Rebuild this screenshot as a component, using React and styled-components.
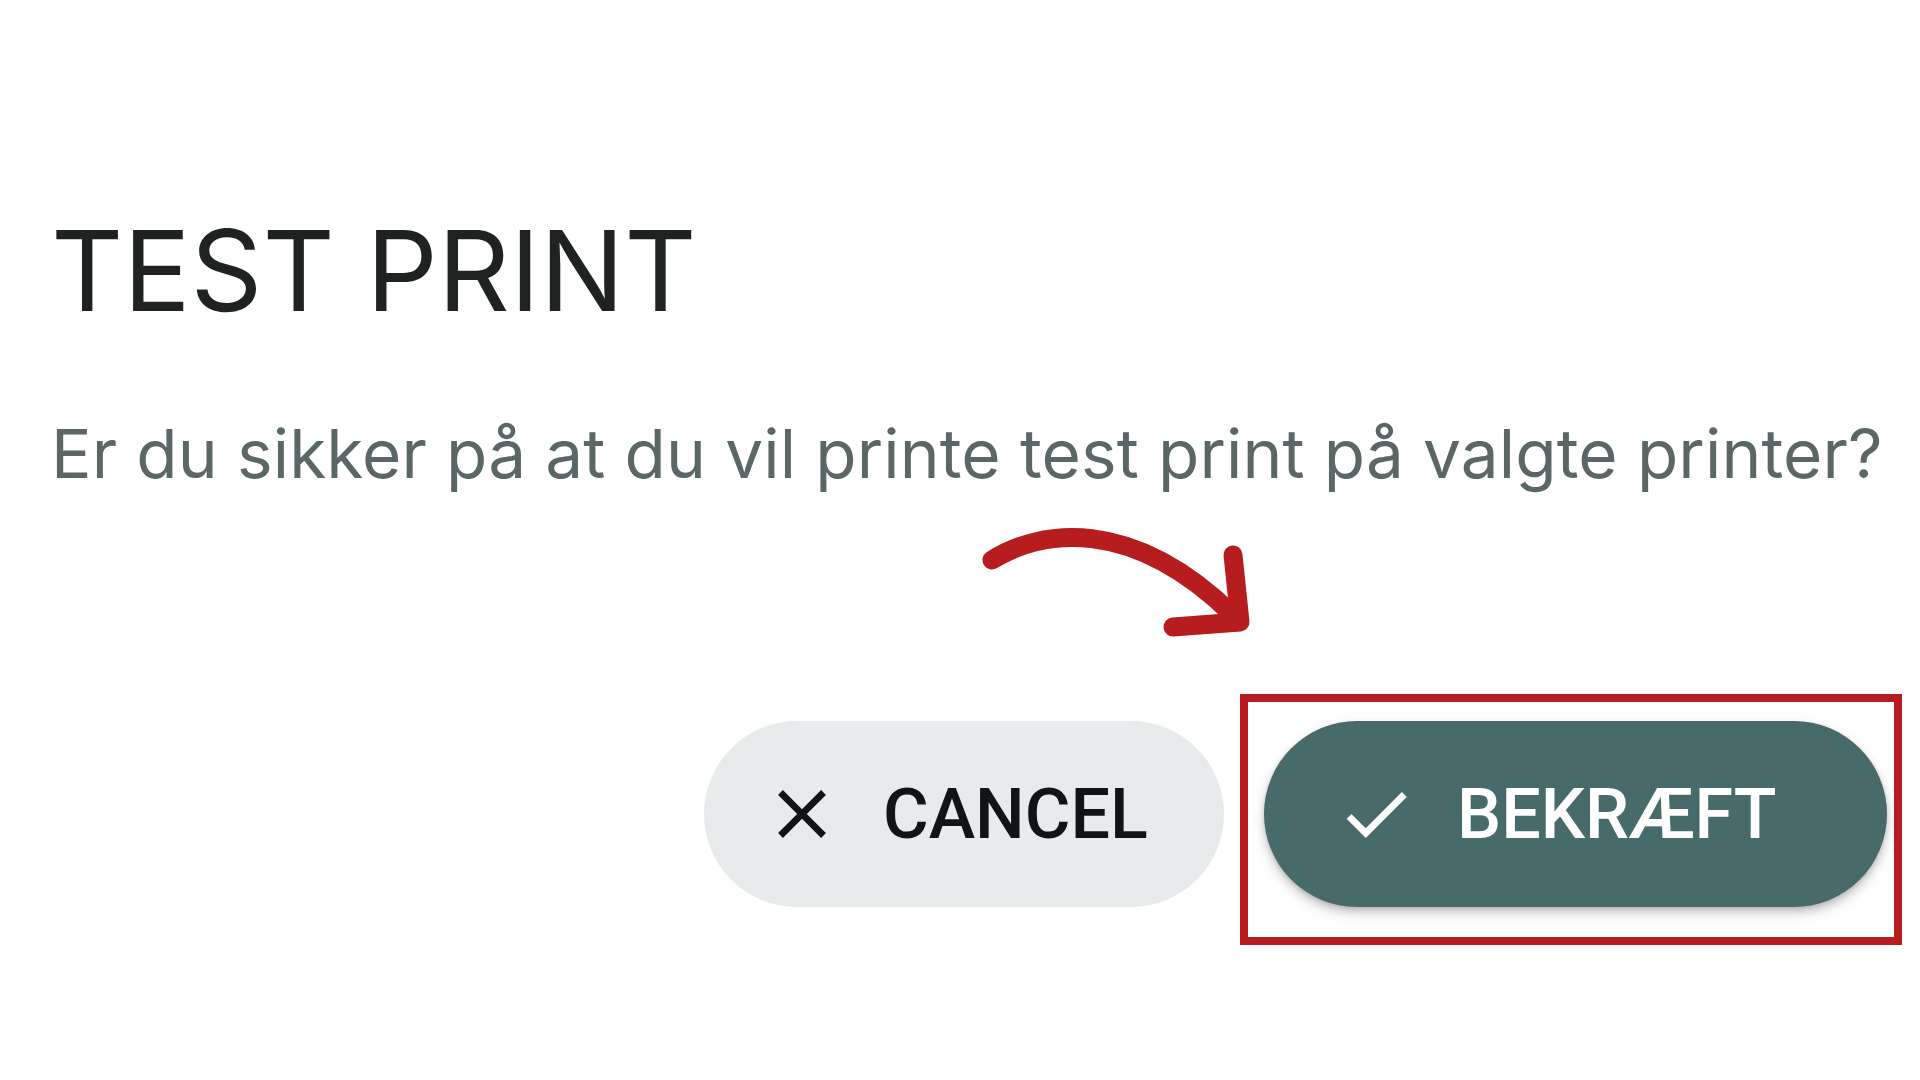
import React from "react";
import styled, { createGlobalStyle } from "styled-components";

const Global = createGlobalStyle`
  html, body { margin: 0; padding: 0; background: #ffffff; }
  body { font-family: "Inter", "Roboto", "Liberation Sans", sans-serif; }
`;

const Page = styled.div`
  position: relative;
  width: 1920px;
  height: 1080px;
  box-sizing: border-box;
  padding: 0 18px 0 51px;
  display: flex;
  flex-direction: column;
  overflow: hidden;
`;

const Title = styled.h1`
  margin: 214px 0 0 0;
  font-size: 112px;
  line-height: 1;
  font-weight: 400;
  color: #1e2222;
  letter-spacing: 0;
`;

const Message = styled.p`
  margin: 94px 0 0 0;
  font-size: 67.5px;
  line-height: 1;
  font-weight: 400;
  color: #5b6766;
  letter-spacing: 0.12px;
  white-space: nowrap;
`;

const Actions = styled.div`
  margin-top: 206px;
  display: flex;
  justify-content: flex-end;
  align-items: flex-start;
  gap: 16px;
`;

const Highlight = styled.div`
  border: 8px solid #b71c1f;
  padding: 19px 7px 30px 16px;
  display: flex;
`;

const Button = styled.button`
  box-sizing: border-box;
  width: ${(p) => p.$width}px;
  height: 186px;
  margin-top: ${(p) => p.$offset || 0}px;
  border: none;
  border-radius: 93px;
  padding: 0 0 0 ${(p) => p.$pad}px;
  display: flex;
  align-items: center;
  gap: 40px;
  background: ${(p) => (p.$primary ? "#476b6b" : "#e8ebeb")};
  color: ${(p) => (p.$primary ? "#ffffff" : "#111414")};
  box-shadow: ${(p) =>
    p.$primary ? "0 6px 12px rgba(0,0,0,0.22), 0 2px 4px rgba(0,0,0,0.12)" : "none"};
  font-family: "Roboto", "Inter", sans-serif;
  font-size: 70px;
  font-weight: 500;
  letter-spacing: 0;
  text-transform: uppercase;
  cursor: pointer;
`;

const Icon = styled.svg`
  width: 82px;
  height: 82px;
  flex: none;
  fill: currentColor;
`;

const Annotation = styled.svg`
  position: absolute;
  left: 970px;
  top: 510px;
  width: 290px;
  height: 140px;
  pointer-events: none;
`;

export default function App() {
  return (
    <>
      <Global />
      <Page>
        <Title>TEST PRINT</Title>
        <Message>Er du sikker på at du vil printe test print på valgte printer?</Message>
        <Actions>
          <Button $width={520} $pad={57} $offset={27}>
            <Icon viewBox="0 0 24 24">
              <path d="M19 6.41 17.59 5 12 10.59 6.41 5 5 6.41 10.59 12 5 17.59 6.41 19 12 13.41 17.59 19 19 17.59 13.41 12z" />
            </Icon>
            Cancel
          </Button>
          <Highlight>
            <Button $primary $width={623} $pad={71}>
              <Icon viewBox="0 0 24 24">
                <path d="M9 16.17 4.83 12l-1.42 1.41L9 19 21 7l-1.41-1.41z" />
              </Icon>
              Bekræft
            </Button>
          </Highlight>
        </Actions>
        <Annotation viewBox="0 0 290 140">
          <g fill="none" stroke="#b71c1f" strokeWidth="19" strokeLinecap="round" strokeLinejoin="round">
            <path d="M22 50 C70 20 160 5 262 104" />
            <path d="M263 45 L270 112 L203 117" />
          </g>
        </Annotation>
      </Page>
    </>
  );
}
